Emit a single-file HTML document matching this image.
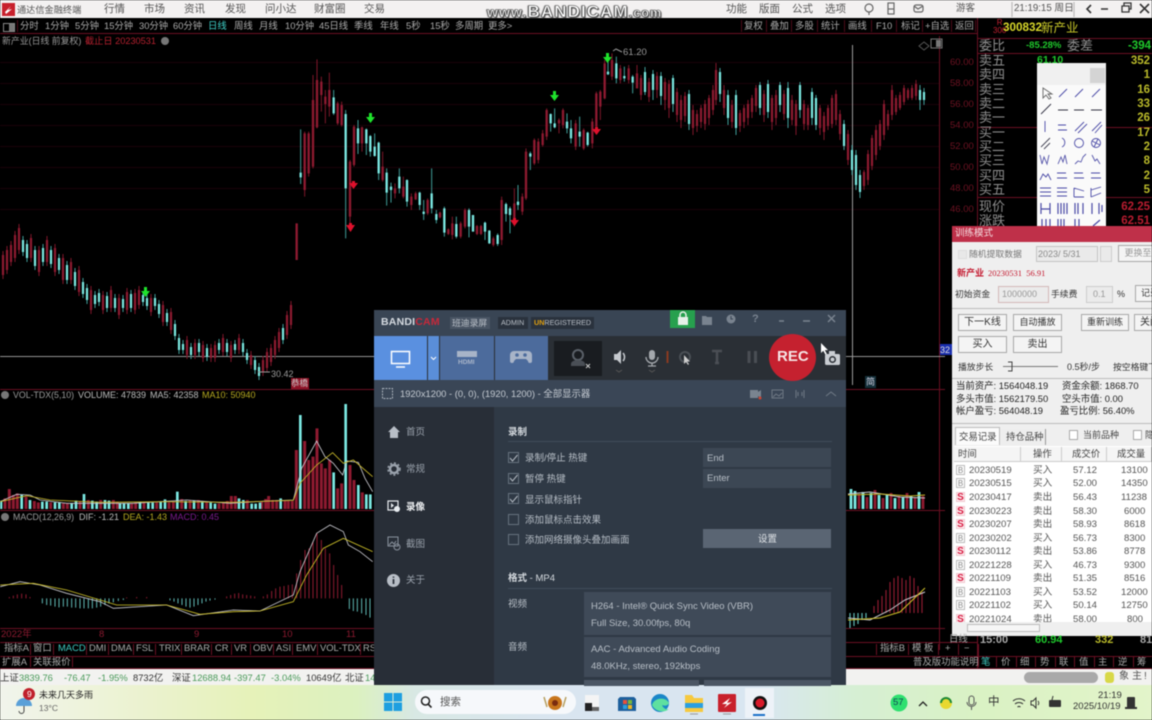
<!DOCTYPE html>
<html lang="zh"><head><meta charset="utf-8"><title>Bandicam</title>
<style>
html,body{margin:0;padding:0;background:#000}
#r{position:relative;width:1152px;height:720px;overflow:hidden;background:#000;font-family:"Liberation Sans","Noto Sans CJK SC",sans-serif;filter:blur(.6px)}
.t{position:absolute;white-space:nowrap;line-height:14px;font-size:10px;color:#aaa}
.b{position:absolute}
svg{position:absolute;left:0;top:0}
.m{color:#555;font-size:10.5px}
.w{color:#222;font-size:10px}
.btn{position:absolute;background:#f4f4f4;border:1px solid #a8a8a8;box-sizing:border-box;text-align:center;font-size:10px;color:#333;line-height:15px;white-space:nowrap;overflow:hidden}
.cb{position:absolute;width:11px;height:11px;border:1px solid #66717d;box-sizing:border-box;left:508px}
.s{font-size:13px;color:#8e8e8e;font-family:"Noto Sans CJK SC",sans-serif}
.y{color:#b9b92a;font-weight:bold;font-size:11.5px;right:2px}
.n{font-size:9.6px;color:#444}
.o{font-size:10px;color:#444}
.bk{color:#b8bfc7;font-size:9.5px}
</style></head><body><div id="r">

<!-- top bar -->
<div class="b" style="left:0;top:0;width:1152px;height:18px;background:#f3f1f1"></div>
<div class="b" style="left:2px;top:3px;width:13px;height:13px;background:#c8202c"></div>
<svg width="20" height="20"><path d="M5 12L11 6L8 10L12 9L6 14z" fill="#fff"/></svg>
<div class="t m" style="left:17px;top:3px;width:64px;font-size:9.2px">通达信金融终端</div>
<div class="t m" style="left:104px;top:2px">行情</div><div class="t m" style="left:144px;top:2px">市场</div><div class="t m" style="left:184px;top:2px">资讯</div><div class="t m" style="left:225px;top:2px">发现</div><div class="t m" style="left:265px;top:2px">问小达</div><div class="t m" style="left:314px;top:2px">财富圈</div><div class="t m" style="left:364px;top:2px">交易</div>
<div class="t" style="left:487px;top:2px;font-size:17px;font-weight:bold;letter-spacing:1.1px;line-height:20px;color:#fff;-webkit-text-stroke:.5px #444;text-shadow:1px 1px 1px #444,-1px 0 1px #666"><span style="font-size:14px">www.</span>BANDICAM<span style="font-size:12.5px">.com</span></div>
<div class="t m" style="left:726px;top:2px">功能</div><div class="t m" style="left:759px;top:2px">版面</div><div class="t m" style="left:792px;top:2px">公式</div><div class="t m" style="left:825px;top:2px">选项</div>
<svg width="1152" height="20" fill="none" stroke="#666" stroke-width="1.2"><circle cx="869" cy="8" r="4"/><path d="M869 12v3"/><rect x="888" y="3" width="6" height="11"/><path d="M888 9h6"/><rect x="914" y="5" width="9" height="7" rx="2"/><path d="M914 6l4 3l5-3"/><path d="M1012 2v15" stroke="#bbb"/><path d="M1074 2v15" stroke="#bbb"/><path d="M1091 5l-4 4l4 4M1101 9h7" stroke="#333" stroke-width="1.6"/><path d="M1122 6h7v6h-7zM1124 6V3h7v6h-2" stroke="#333" stroke-width="1.3"/><path d="M1140 4l9 9M1149 4l-9 9" stroke="#333" stroke-width="1.6"/></svg>
<div class="t m" style="left:956px;top:2px;font-size:9.5px">游客</div>
<div class="t m" style="left:1014px;top:2px;font-size:9.7px">21:19:15 周日</div>

<!-- toolbar -->
<svg width="1152" height="720" fill="none">
<path d="M0 33.5H978M0 389.5H945M0 510.5H945M0 628.5H945M0 642.5H374M0 656.5H374M0 668.5H374" stroke="#6a0f22"/>
<path d="M846 642.5H978M846 656.5H1152M846 668.5H1152" stroke="#6a0f22"/>
<path d="M939.5 36V650M977.5 18V668M978 38.5H1152M978 53.5H1152M978 127.5H1037M978 197.5H1037M1106 127.5H1152M1106 197.5H1152" stroke="#6a0f22"/>
<path d="M17.5 20V32M741.5 20V32M766.5 20V32M791.5 20V32M817.5 20V32M844.5 20V32M871.5 20V32M896.5 20V32M922.5 20V32M951.5 20V32M975.5 20V32" stroke="#4c0a18"/>
<path d="M30.5 644V655M53.5 644V655M86.5 644V655M108.5 644V655M133.5 644V655M155.5 644V655M181.5 644V655M211.5 644V655M231.5 644V655M250.5 644V655M273.5 644V655M292.5 644V655M317.5 644V655M360.5 644V655M30.5 657V667M72.5 657V667" stroke="#6a0f22"/>
<path d="M876.5 644V655M908.5 644V655M938.5 644V655M958.5 644V655M978.5 644V667M996.5 657V667M1016.5 657V667M1035.5 657V667M1055.5 657V667M1074.5 657V667M1094.5 657V667M1113.5 657V667M1133.5 657V667" stroke="#6a0f22"/>
<rect x="3.5" y="23.5" width="11" height="8" stroke="#888"/><rect x="9" y="24" width="5" height="7" fill="#777"/>
<path d="M0 62.5H939M0 83.5H939M0 104.5H939M0 125.5H939M0 146.5H939M0 167.5H939M0 188.5H939M0 209.5H939" stroke="#1a0208"/>
<path d="M0 356.5H945" stroke="#b8b8b8" stroke-opacity=".8"/><path d="M852.5 45V385" stroke="#9c9c9c"/>
<path d="M924 42l5 4l-5 4l-5-4z" stroke="#555"/><rect x="931" y="39" width="11" height="9" stroke="#777"/><rect x="936" y="40" width="5" height="7" fill="#777"/>
</svg>
<div class="t" style="left:20px;top:19px;font-size:9.4px">分时</div><div class="t" style="left:45px;top:19px;font-size:9.4px">1分钟</div><div class="t" style="left:75px;top:19px;font-size:9.4px">5分钟</div><div class="t" style="left:104px;top:19px;font-size:9.4px">15分钟</div><div class="t" style="left:139px;top:19px;font-size:9.4px">30分钟</div><div class="t" style="left:173px;top:19px;font-size:9.4px">60分钟</div><div class="t" style="left:208px;top:19px;font-size:9.4px;color:#3fd0c8">日线</div><div class="t" style="left:234px;top:19px;font-size:9.4px">周线</div><div class="t" style="left:259px;top:19px;font-size:9.4px">月线</div><div class="t" style="left:285px;top:19px;font-size:9.4px">10分钟</div><div class="t" style="left:319px;top:19px;font-size:9.4px">45日线</div><div class="t" style="left:354px;top:19px;font-size:9.4px">季线</div><div class="t" style="left:380px;top:19px;font-size:9.4px">年线</div><div class="t" style="left:406px;top:19px;font-size:9.4px">5秒</div><div class="t" style="left:430px;top:19px;font-size:9.4px">15秒</div><div class="t" style="left:455px;top:19px;font-size:9.4px">多周期</div><div class="t" style="left:488px;top:19px;font-size:9.4px">更多&gt;</div>
<div class="t" style="left:744px;top:19px;font-size:9.4px">复权</div><div class="t" style="left:770px;top:19px;font-size:9.4px">叠加</div><div class="t" style="left:795px;top:19px;font-size:9.4px">多股</div><div class="t" style="left:821px;top:19px;font-size:9.4px">统计</div><div class="t" style="left:848px;top:19px;font-size:9.4px">画线</div><div class="t" style="left:876px;top:19px;font-size:9.4px">F10</div><div class="t" style="left:901px;top:19px;font-size:9.4px">标记</div><div class="t" style="left:925px;top:19px;font-size:9.4px">+自选</div><div class="t" style="left:955px;top:19px;font-size:9.4px">返回</div>
<div class="t" style="left:2px;top:34px;font-size:8.9px;color:#999">新产业(日线 前复权)</div>
<div class="t" style="left:85px;top:34px;font-size:9.2px;color:#b4202e">截止日 20230531</div>
<div class="b" style="left:161px;top:37px;width:8px;height:8px;border-radius:50%;background:#777"></div>

<!-- candles -->
<svg width="1152" height="720" fill="none">
<defs>
<path id="lr" d="M3 255V275M7 250V270M11 245V262M15 235V258M19 228V250M31 238V258M39 250V272M47 240V262M55 248V272M63 258V280M71 262V280M79 270V292M91 290V310M103 295V310M111 290V308M119 298V315M127 292V310M135 293V310M139 290V305M151 298V312M163 305V322M171 312V330M187 340V355M195 343V355M203 345V358M211 348V358M215 345V358M223 338V352M231 345V358M239 338V350M251 355V365M263 360V372M267 352V368M271 348V362M275 340V355M279 332V348M287 315V335M291 305V325"/>
<path id="lc" d="M23 240V252M27 244V258M35 250V266M43 248V262M51 250V264M59 258V270M67 265V280M75 272V286M83 282V294M87 288V300M95 295V304M99 293V302M107 296V308M115 298V308M123 299V308M131 294V308M143 295V302M147 298V306M155 298V306M159 304V314M167 313V322M175 324V336M179 338V350M183 344V350M191 347V355M199 343V352M207 348V357M219 343V350M227 343V352M235 344V350M243 343V352M247 353V360M255 360V370M259 367V376M283 328V340"/>
</defs>
<g transform="translate(240,40) scale(.33333)">
<path stroke="#7e1629" stroke-width="3" d="M170 550V660M194 275V470M206 275V410M219 105V385M231 58V265M244 110V215M256 150V250M268 98V230M293 185V255M305 185V260M330 360V560M342 255V380M366 260V335M428 335V425M465 430V475M490 410V475M514 460V510M527 455V480M563 475V525M600 515V535M625 565V585M637 530V598M662 545V595M675 505V565M711 555V585M723 555V585M760 590V620M785 470V615M823 445V560M847 460V525M858 325V480M883 295V375M895 295V370M908 270V320M920 205V300M957 235V280M969 205V265M1007 240V330M1031 265V330M1057 235V325M1069 155V265M1081 150V240M1094 60V178M1116 40V120M1141 75V130M1166 75V130M1191 75V145"/>
<path stroke="#8e1a30" stroke-width="7" d="M170 550V660M194 280V450M206 280V400M219 180V380M231 120V262M244 125V165M256 170V192M268 150V200M293 190V250M305 195V255M330 365V530M342 260V375M366 262V310M428 380V420M465 445V460M490 440V470M514 470V495M527 460V478M563 480V520M600 518V532M625 568V582M637 550V585M662 550V590M675 510V560M711 558V582M723 558V582M760 595V615M785 480V600M823 490V555M847 470V515M858 335V475M883 300V370M895 305V360M908 280V315M920 210V290M957 240V250M969 210V255M1007 250V320M1031 270V325M1057 245V310M1069 160V260M1081 155V200M1094 70V175M1116 60V110M1141 85V120M1166 85V120M1191 100V145"/>
<path stroke="#3f9c98" stroke-width="3" d="M182 268V432M281 150V225M317 210V595M354 240V342M379 265V345M391 285V350M404 280V350M416 305V420M440 385V497M453 428V488M478 385V460M501 418V500M539 455V510M551 480V540M575 385V520M589 510V550M613 500V590M649 530V595M687 505V592M699 525V575M735 545V600M748 570V612M773 580V618M798 488V545M810 500V580M834 435V510M871 335V390M932 220V275M944 205V265M981 220V280M993 240V310M1019 230V320M1043 275V320M1104 60V105M1129 50V130M1153 80V125M1178 105V160"/>
<path stroke="#7be8e2" stroke-width="7" d="M182 398V412M281 172V220M317 222V445M354 265V310M379 268V310M391 288V335M404 320V348M416 308V400M440 398V458M453 440V450M478 410V445M501 420V485M539 458V495M551 515V522M575 460V505M589 522V540M613 505V578M649 552V590M687 510V560M699 525V575M735 548V575M748 572V610M773 585V612M798 492V522M810 505V525M834 485V495M871 340V350M932 222V250M944 250V262M981 245V265M993 265V295M1019 275V290M1043 278V315M1104 95V103M1129 70V115M1153 108V115M1178 110V128"/>
</g>
<!-- right side candles -->
<path stroke="#7e1629" d="M641 75V100M649 78V102M657 72V98M665 78V110M669 80V118M677 88V122M681 95V128M685 92V122M693 105V135M697 110V132M701 105V128M705 100V130M709 95V125M713 85V115M716 63V105M724 85V115M732 100V128M740 110V132M744 105V128M748 100V125M752 95V118M756 85V112M764 90V122M772 95V130M776 90V125M784 90V120M792 95V125M796 100V135M804 100V130M808 105V130M820 105V135M824 112V140M828 105V130M832 95V128M836 90V125M840 110V140M848 130V165M864 170V190M868 150V185M872 135V170M876 125V160M880 120V150M884 100V140M888 110V130M892 85V120M896 95V115M900 92V110M904 85V105M908 88V100M912 85V100M916 80V100"/>
<path stroke="#8e1a30" stroke-width="2.200" d="M641 78V95M649 82V97M657 76V90M665 82V100M669 84V108M677 92V115M681 100V120M685 96V116M693 110V128M697 114V126M701 108V122M705 104V124M709 98V118M713 90V110M716 70V100M724 90V108M732 105V122M740 113V126M744 108V122M748 104V118M752 98V112M756 88V106M764 94V115M772 98V122M776 95V118M784 94V114M792 100V120M796 104V126M804 104V124M808 108V125M820 108V128M824 116V132M828 108V126M832 98V124M836 94V120M840 114V134M848 134V160M864 172V186M868 154V180M872 138V166M876 130V155M880 124V146M884 104V135M888 114V126M892 90V115M896 98V112M900 95V108M904 88V102M908 90V98M912 88V98M916 84V96"/>
<path stroke="#3f9c98" d="M645 67V95M653 70V100M661 72V105M673 75V112M689 90V130M720 68V102M728 90V125M736 90V135M760 82V115M768 80V118M780 82V112M788 82V128M800 82V118M812 88V125M816 95V130M844 120V150M852 145V175M856 150V190M860 170V198M920 85V110M924 88V105"/>
<path stroke="#7be8e2" stroke-width="2.200" d="M645 72V92M653 74V90M661 76V96M673 78V104M689 94V124M720 72V94M728 95V118M736 95V128M760 85V108M768 84V112M780 85V105M788 88V118M800 85V110M812 92V118M816 98V125M844 124V146M852 150V170M856 155V185M860 175V192M920 90V100M924 92V100"/>
<!-- left candles -->
<use href="#lr" stroke="#7e1629" transform="translate(0,-4)"/><use href="#lr" stroke="#7e1629" transform="translate(0,4)"/>
<use href="#lr" stroke="#8e1a30" stroke-width="2.200"/>
<use href="#lc" stroke="#3f9c98" transform="translate(0,-4)"/><use href="#lc" stroke="#3f9c98" transform="translate(0,4)"/>
<use href="#lc" stroke="#7be8e2" stroke-width="2.200"/>
<!-- signals -->
<g fill="#1fe32c"><path d="M369 113h3v4h3l-4.500 6l-4.500-6h3z"/><path d="M553 91h3v4h3l-4.500 6l-4.500-6h3z"/><path d="M606 53h3v4h3l-4.500 6l-4.500-6h3z"/><path d="M144 287h3v4h3l-4.500 6l-4.500-6h3z"/></g>
<g fill="#e0102c"><path d="M352 181h3v2h3l-4.500 6l-4.500-6h3z"/><path d="M349 223h3v2h3l-4.500 7l-4.500-7h3z"/><path d="M513 218h3v2h3l-4.500 6l-4.500-6h3z"/><path d="M595 127h3v2h3l-4.500 6l-4.500-6h3z"/></g>
<path d="M613 51l3-2 6 3M258 372h12" stroke="#999"/>
<!-- volume (zoom space) -->
<g transform="translate(0,385) scale(.33333)">
<path stroke="#8e1a30" stroke-width="9" d="M15 372V340M28 372V312M40 372V330M52 372V325M78 372V335M103 372V348M115 372V352M152 372V352M190 372V355M202 372V355M240 372V348M265 372V345M302 372V345M340 372V345M352 372V350M395 372V355M407 372V352M432 372V352M470 372V352M507 372V352M520 372V350M545 372V342M570 372V345M595 372V345M620 372V352M657 372V355M670 372V352M682 372V348M694 372V333M706 372V333M742 372V345M785 372V350M797 372V342M806 372V333M818 372V345M830 372V345M855 372V345M865 372V348M877 372V348M889 372V195M914 372V168M926 372V225M939 372V215M951 372V130M964 372V235M976 372V250M989 372V225M1013 372V310M1025 372V295M1050 372V240M1062 372V285M1087 372V322"/>
<path stroke="#7be8e2" stroke-width="8" d="M3 372V347M65 372V330M90 372V345M127 372V350M140 372V350M165 372V352M178 372V352M215 372V355M228 372V347M252 372V327M277 372V347M290 372V350M315 372V345M327 372V347M360 372V355M372 372V355M385 372V355M420 372V350M445 372V353M458 372V353M482 372V350M495 372V343M532 372V320M557 372V348M582 372V347M607 372V348M632 372V353M645 372V356M717 372V340M730 372V345M755 372V356M767 372V356M780 372V353M842 372V340M901 372V90M1001 372V262M1037 372V57M1075 372V300M1099 372V328M1111 372V328"/>
<path stroke="#c9c9d0" stroke-width="2.500" d="M0 350L50 328L90 330L120 345L200 355L400 355L560 345L690 355L800 348L880 345L905 250L950 168L975 215L1000 235L1028 270L1040 228L1075 232L1095 280L1118 320"/>
<path stroke="#c8b82a" stroke-width="2.500" d="M0 350L80 332L150 345L300 352L500 350L700 352L880 346L900 295L950 240L998 203L1030 235L1060 225L1118 275"/>
</g>
<!-- macd (zoom space) -->
<g transform="translate(0,385) scale(.33333)">
<path stroke="#8e1a30" stroke-width="3" d="M28 640V636M40 640V632M52 640V628M65 640V626M78 640V628M90 640V636M380 640V637M410 640V636M440 640V636M680 640V634M692 640V630M704 640V626M716 640V624M728 640V628M740 640V630M752 640V632M764 640V634M790 640V634M802 640V628M815 640V618M827 640V610M840 640V605M852 640V603M865 640V600M877 640V598M890 640V565M902 640V525M915 640V495M927 640V490M939 640V470M951 640V445M964 640V465M976 640V490M989 640V505M1001 640V540M1013 640V570M1025 640V600"/>
<path stroke="#5fb8b4" stroke-width="3" d="M127 640V655M140 640V660M152 640V662M165 640V665M177 640V667M190 640V665M202 640V665M215 640V668M227 640V668M240 640V670M252 640V670M265 640V670M277 640V670M290 640V668M302 640V665M315 640V660M327 640V655M340 640V652M355 640V648M370 640V645M510 640V646M522 640V650M534 640V655M546 640V660M558 640V665M570 640V668M582 640V665M594 640V660M606 640V655M618 640V650M630 640V647M645 640V644M1048 640V672M1060 640V678M1072 640V680M1085 640V685M1098 640V690M1110 640V698"/>
<path stroke="#c9c9d0" stroke-width="2.500" d="M0 605L60 590L120 600L200 625L300 650L340 670L500 660L580 692L700 675L780 678L880 630L900 560L950 445L990 420L1030 440L1045 480L1080 500L1118 530"/>
<path stroke="#d2c42a" stroke-width="2.500" d="M0 600L100 595L200 615L350 660L500 660L600 688L700 680L780 678L880 650L920 570L970 490L1030 460L1118 500"/>
</g>
<!-- volume & macd right -->
<path stroke="#8e1a30" stroke-width="2.800" d="M859 509V494M867 509V497M875 509V490M883 509V498M891 509V493M899 509V496M907 509V493M915 509V498M923 509V496"/>
<path stroke="#7be8e2" stroke-width="2.800" d="M851 509V489M855 509V491M863 509V492M871 509V493M879 509V495M887 509V494M895 509V498M903 509V497M911 509V496M919 509V492"/>
<path stroke="#c9c9d0" d="M848 494L870 492L900 497L925 498"/><path stroke="#c8b82a" d="M848 495L880 494L910 496L925 495"/>
<path stroke="#8e1a30" stroke-width="1.200" d="M874 613V606M878 613V600M882 613V596M886 613V590M890 613V582M894 613V578M898 613V576M902 613V578M906 613V580M910 613V576M914 613V578M918 613V586M922 613V592"/>
<path stroke="#5fb8b4" stroke-width="1.200" d="M850 613V628M854 613V626M858 613V624M862 613V620M866 613V618"/>
<path stroke="#c9c9d0" d="M848 618L870 620L890 610L905 600L925 592"/><path stroke="#d2c42a" d="M848 620L880 618L900 612L925 588"/>
</svg>
<div class="t" style="left:623px;top:46px;font-size:9.5px;color:#999">61.20</div>
<div class="t" style="left:271px;top:367px;font-size:9px;color:#999">30.42</div>
<div class="b" style="left:291px;top:378px;width:18px;height:11px;background:#8e1226"></div>
<div class="t" style="left:291px;top:376px;font-size:8.5px;color:#ccc">恭橋</div>
<div class="t" style="left:865px;top:376px;font-size:9px;color:#ccd;background:#15303a;line-height:12px;padding:0 1px">简</div>
<div class="b" style="left:940px;top:344px;width:12px;height:11px;background:#1a2fae"></div>
<div class="t" style="left:940px;top:343px;font-size:9px;color:#ddd">32</div>

<!-- axis labels -->
<div class="t" style="left:950px;top:56px;font-size:9.5px;color:#6e1222">60.00</div><div class="t" style="left:950px;top:77px;font-size:9.5px;color:#6e1222">58.00</div><div class="t" style="left:950px;top:98px;font-size:9.5px;color:#6e1222">56.00</div><div class="t" style="left:950px;top:119px;font-size:9.5px;color:#6e1222">54.00</div><div class="t" style="left:950px;top:140px;font-size:9.5px;color:#6e1222">52.00</div><div class="t" style="left:950px;top:161px;font-size:9.5px;color:#6e1222">50.00</div><div class="t" style="left:950px;top:182px;font-size:9.5px;color:#6e1222">48.00</div><div class="t" style="left:950px;top:203px;font-size:9.5px;color:#6e1222">46.00</div>

<!-- indicator titles -->
<div class="b" style="left:1px;top:391px;width:8px;height:8px;border-radius:50%;background:#777"></div>
<div class="t" style="left:13px;top:388px;font-size:8.8px;color:#999">VOL-TDX(5,10)</div><div class="t" style="left:78px;top:388px;font-size:9px;color:#bbb">VOLUME: 47839</div><div class="t" style="left:150px;top:388px;font-size:9px;color:#bbb">MA5: 42358</div><div class="t" style="left:202px;top:388px;font-size:9px;color:#b5a820">MA10: 50940</div>
<div class="b" style="left:1px;top:513px;width:8px;height:8px;border-radius:50%;background:#777"></div>
<div class="t" style="left:13px;top:510px;font-size:8.8px;color:#999">MACD(12,26,9)</div><div class="t" style="left:79px;top:510px;font-size:9px;color:#bbb">DIF: -1.21</div><div class="t" style="left:123px;top:510px;font-size:9px;color:#b5a820">DEA: -1.43</div><div class="t" style="left:170px;top:510px;font-size:9px;color:#7a1a8c">MACD: 0.45</div>

<!-- bottom tabs -->
<div class="t" style="left:1px;top:628px;font-size:9.5px;color:#8c1a30">2022年</div><div class="t" style="left:99px;top:628px;font-size:9.5px;color:#8c1a30">8</div><div class="t" style="left:194px;top:628px;font-size:9.5px;color:#8c1a30">9</div><div class="t" style="left:282px;top:628px;font-size:9.5px;color:#8c1a30">10</div><div class="t" style="left:346px;top:628px;font-size:9.5px;color:#8c1a30">11</div>
<div class="t" style="left:4px;top:641px;font-size:9.4px">指标A</div><div class="t" style="left:33px;top:641px;font-size:9.4px">窗口</div><div class="t" style="left:58px;top:641px;font-size:9.4px;color:#3fc8c0">MACD</div><div class="t" style="left:89px;top:641px;font-size:9.4px">DMI</div><div class="t" style="left:111px;top:641px;font-size:9.4px">DMA</div><div class="t" style="left:136px;top:641px;font-size:9.4px">FSL</div><div class="t" style="left:159px;top:641px;font-size:9.4px">TRIX</div><div class="t" style="left:184px;top:641px;font-size:9.4px">BRAR</div><div class="t" style="left:215px;top:641px;font-size:9.4px">CR</div><div class="t" style="left:234px;top:641px;font-size:9.4px">VR</div><div class="t" style="left:253px;top:641px;font-size:9.4px">OBV</div><div class="t" style="left:276px;top:641px;font-size:9.4px">ASI</div><div class="t" style="left:296px;top:641px;font-size:9.4px">EMV</div><div class="t" style="left:320px;top:641px;font-size:9.4px">VOL-TDX</div><div class="t" style="left:363px;top:641px;font-size:9.4px">RS</div>
<div class="t" style="left:2px;top:655px;font-size:9.4px">扩展A</div><div class="t" style="left:33px;top:655px;font-size:9.4px">关联报价</div>
<div class="t" style="left:880px;top:641px;font-size:9.4px">指标B</div><div class="t" style="left:912px;top:641px;font-size:9.4px">模 板</div><div class="t" style="left:945px;top:641px;font-size:9.4px">+</div><div class="t" style="left:964px;top:641px;font-size:9.4px">−</div>
<div class="t" style="left:913px;top:655px;font-size:9.4px">普及版功能说明</div><div class="t" style="left:981px;top:655px;font-size:9.4px;color:#3fc8c0">笔</div><div class="t" style="left:1001px;top:655px;font-size:9.4px">价</div><div class="t" style="left:1020px;top:655px;font-size:9.4px">细</div><div class="t" style="left:1040px;top:655px;font-size:9.4px">势</div><div class="t" style="left:1059px;top:655px;font-size:9.4px">联</div><div class="t" style="left:1079px;top:655px;font-size:9.4px">值</div><div class="t" style="left:1098px;top:655px;font-size:9.4px">主</div><div class="t" style="left:1118px;top:655px;font-size:9.4px">逆</div><div class="t" style="left:1137px;top:655px;font-size:9.4px">筹</div>

<!-- quote panel -->
<div class="t" style="left:993px;top:19px;font-size:8px;line-height:8px;color:#c02030;text-align:center">R<br>300</div>
<div class="t" style="left:1003px;top:21px;font-size:11.7px;font-weight:bold;color:#d8d82a">300832</div>
<div class="t" style="left:1041px;top:21px;font-size:12.5px;color:#c8c82a">新产业</div>
<div class="t s" style="left:979px;top:38px">委比</div><div class="t" style="left:1026px;top:39px;font-size:9.5px;font-weight:bold;color:#1fc82c">-85.28%</div><div class="t s" style="left:1067px;top:38px">委差</div><div class="t y" style="top:39px;right:1px;color:#1fc82c">-394</div>
<div class="t s" style="left:979px;top:53px">卖五</div><div class="t s" style="left:979px;top:67px">卖四</div><div class="t s" style="left:979px;top:82px">卖三</div><div class="t s" style="left:979px;top:96px">卖二</div><div class="t s" style="left:979px;top:110px">卖一</div><div class="t s" style="left:979px;top:125px">买一</div><div class="t s" style="left:979px;top:139px">买二</div><div class="t s" style="left:979px;top:153px">买三</div><div class="t s" style="left:979px;top:168px">买四</div><div class="t s" style="left:979px;top:182px">买五</div><div class="t s" style="left:979px;top:199px">现价</div><div class="t s" style="left:979px;top:213px">涨跌</div>
<div class="t" style="left:1037px;top:53px;font-size:10.5px;font-weight:bold;color:#1fc82c">61.10</div>
<div class="t y" style="top:54px">352</div><div class="t y" style="top:68px">1</div><div class="t y" style="top:83px">16</div><div class="t y" style="top:97px">33</div><div class="t y" style="top:111px">26</div><div class="t y" style="top:126px">17</div><div class="t y" style="top:140px">2</div><div class="t y" style="top:154px">8</div><div class="t y" style="top:169px">2</div><div class="t y" style="top:183px">5</div>
<div class="t y" style="top:200px;color:#b81c30">62.25</div><div class="t y" style="top:214px;color:#b81c30">62.51</div>

<!-- palette -->
<div class="b" style="left:1037px;top:63px;width:69px;height:165px;background:#fafafa;border-radius:2px"></div>
<div class="b" style="left:1037px;top:63px;width:69px;height:22px;background:#f0f0f0"></div>
<div class="b" style="left:1090px;top:68px;width:15px;height:15px;background:#d4d4d4"></div>
<svg width="1152" height="230" fill="none" stroke="#4a4aa6" stroke-width=".9">
<path d="M1043 88l0 10l3-3l3 4l2-1l-3-4h4z" stroke="#666"/><path d="M1059 97l8-8M1075 97l8-8M1092 97l8-8"/>
<path d="M1041 114l10-10M1058 110h10M1074 110h10M1091 110h11" stroke="#334"/>
<path d="M1045 121v11M1058 130h9M1058 125h8M1075 131l9-9M1078 133l9-9M1092 131l9-9M1095 133l7-8"/>
<path d="M1041 147l9-9M1044 149l6-6" stroke="#445"/><path d="M1062 138a5 5 0 0 1 0 9" /><circle cx="1079" cy="143" r="4.500"/><circle cx="1096" cy="143" r="4.500"/><path d="M1092 141l8 4M1094 147l4-8"/>
<path d="M1040 155l2 9l2-7l3 7l2-9M1058 164l3-7l2 5l2-7l2 9M1075 164l3-3l3 1l2-5l3-3M1092 155l3 6l2-2l3 5" stroke="#55a"/>
<path d="M1040 180l3-6l3 3l2-3l3 6M1057 178h10M1057 173h9M1074 178h10M1074 173h9M1091 178h10M1091 173h9"/>
<path d="M1040 188h11M1040 192h11M1040 196h11M1057 188h10M1057 192h10M1057 196h10M1074 188l10 3M1074 197h10M1074 188v9M1091 190l10-3M1091 197l10-4M1091 188v9"/>
<path d="M1041 203v11M1041 209h9M1050 203v11M1058 203v11M1061 203v11M1064 203v11M1067 203v11M1075 203v11M1078 203v11M1083 203v11M1092 203v11M1099 203v11M1102 205v7" stroke-width="1.200"/>
<path d="M1042 219v8M1046 219v8M1050 219v8M1058 219v8M1061 219v8M1064 219v8M1075 219v8M1079 219v8M1093 226l7-6" stroke-width="1.200"/>
</svg>

<!-- training dialog -->
<div class="b" style="left:952px;top:226px;width:200px;height:410px;background:#efefef"></div>
<div class="b" style="left:952px;top:226px;width:200px;height:16px;background:#bf3049"></div>
<div class="t" style="left:955px;top:227px;font-size:9.5px;color:#f4dfe2">训练模式</div>
<div class="b" style="left:958px;top:250px;width:9px;height:9px;background:#e8e8e8;border:1px solid #ddd;box-sizing:border-box"></div>
<div class="t" style="left:969px;top:247px;font-size:8.8px;color:#777">随机提取数据</div>
<div class="b" style="left:1036px;top:246px;width:62px;height:16px;background:#eaeaea;border:1px solid #c4c4c4;box-sizing:border-box"></div>
<div class="t" style="left:1038px;top:247px;font-size:9px;color:#8a8a8a">2023/ 5/31</div>
<div class="b" style="left:1100px;top:246px;width:12px;height:16px;background:#eaeaea;border:1px solid #ccc;box-sizing:border-box"></div>
<div class="btn" style="left:1118px;top:245px;width:40px;height:17px;color:#999;font-size:9px">更换至</div>
<div class="t" style="left:957px;top:266px;font-size:9px;color:#c41a30;font-weight:bold">新产业</div>
<div class="t" style="left:988px;top:266px;font-size:8.5px;color:#c41a30;font-family:'Liberation Serif',serif">20230531&nbsp; 56.91</div>
<div class="t" style="left:955px;top:287px;font-size:8.8px;color:#333">初始资金</div>
<div class="b" style="left:998px;top:286px;width:51px;height:17px;background:#ebebeb;border:1px solid #d2b8b8;box-sizing:border-box"></div>
<div class="t" style="left:1002px;top:287px;font-size:9px;color:#999">1000000</div>
<div class="t" style="left:1051px;top:287px;font-size:8.8px;color:#333">手续费</div>
<div class="b" style="left:1086px;top:286px;width:27px;height:17px;background:#ebebeb;border:1px solid #ccc;box-sizing:border-box"></div>
<div class="t" style="left:1093px;top:287px;font-size:9px;color:#999">0.1</div>
<div class="t" style="left:1117px;top:287px;font-size:9px;color:#333">%</div>
<div class="btn" style="left:1135px;top:285px;width:30px;height:17px;font-size:9px">记录</div>
<div class="b" style="left:952px;top:308px;width:200px;height:1px;background:#bbb"></div>
<div class="btn" style="left:958px;top:314px;width:49px;height:17px">下一K线</div><div class="btn" style="left:1013px;top:314px;width:49px;height:17px;font-size:9px">自动播放</div><div class="btn" style="left:1081px;top:314px;width:48px;height:17px;font-size:9px">重新训练</div><div class="btn" style="left:1134px;top:314px;width:30px;height:17px;text-align:left;padding-left:5px">关闭</div>
<div class="btn" style="left:958px;top:336px;width:49px;height:17px">买入</div><div class="btn" style="left:1013px;top:336px;width:49px;height:17px">卖出</div>
<div class="t" style="left:958px;top:360px;font-size:8.8px;color:#333">播放步长</div>
<svg width="1152" height="380" fill="none"><path d="M1003 366.500H1058" stroke="#777"/><path d="M1008 362h4v9h-4" stroke="#444"/></svg>
<div class="t" style="left:1067px;top:360px;font-size:9px;color:#333">0.5秒/步</div><div class="t" style="left:1113px;top:360px;font-size:8.8px;color:#333">按空格键下</div>
<div class="b" style="left:952px;top:378px;width:200px;height:1px;background:#bbb"></div>
<div class="t w" style="left:956px;top:379px;font-size:9.4px">当前资产: 1564048.19</div><div class="t w" style="left:1062px;top:379px;font-size:9.4px">资金余额: 1868.70</div>
<div class="t w" style="left:956px;top:392px;font-size:9.4px">多头市值: 1562179.50</div><div class="t w" style="left:1062px;top:392px;font-size:9.4px">空头市值: 0.00</div>
<div class="t w" style="left:956px;top:404px;font-size:9.4px">帐户盈亏: 564048.19</div><div class="t w" style="left:1060px;top:404px;font-size:9.4px">盈亏比例: 56.40%</div>
<div class="b" style="left:952px;top:423px;width:200px;height:1px;background:#bbb"></div>
<div class="b" style="left:955px;top:427px;width:45px;height:18px;background:#fbfbfb;border:1px solid #bbb;border-bottom:0;box-sizing:border-box"></div>
<div class="b" style="left:1000px;top:429px;width:46px;height:16px;background:#eee;border-right:1px solid #999;box-sizing:border-box"></div>
<div class="t o" style="left:959px;top:430px;font-size:9.4px">交易记录</div><div class="t o" style="left:1006px;top:430px;font-size:9.4px">持仓品种</div>
<div class="b" style="left:1069px;top:430px;width:9px;height:10px;background:#fff;border:1px solid #aaa;box-sizing:border-box"></div><div class="t o" style="left:1083px;top:428px;font-size:9px">当前品种</div>
<div class="b" style="left:1133px;top:430px;width:9px;height:10px;background:#fff;border:1px solid #aaa;box-sizing:border-box"></div><div class="t o" style="left:1145px;top:428px;font-size:9px">隐</div>
<div class="b" style="left:954px;top:446px;width:198px;height:176px;background:#fff"></div>
<div class="b" style="left:954px;top:447px;width:198px;height:15px;background:#f5f5f5;border-bottom:1px solid #ccc;box-sizing:border-box"></div>
<svg width="1152" height="462" fill="none" stroke="#ccc"><path d="M1020.500 447V462M1061.500 447V462M1106.500 447V462M1151.500 447V462"/></svg>
<div class="t o" style="left:958px;top:447px;font-size:9.4px">时间</div><div class="t o" style="left:1033px;top:447px;font-size:9.4px">操作</div><div class="t o" style="left:1072px;top:447px;font-size:9.4px">成交价</div><div class="t o" style="left:1117px;top:447px;font-size:9.4px">成交量</div>

<div class="b" style="left:954px;top:463px;width:198px;height:159px;overflow:hidden">
<style>.i{position:absolute;left:2px;width:9px;height:10px;box-sizing:border-box;font-size:8px;line-height:9px;text-align:center;border:1px solid #bbb;color:#888;background:#fff}.i.sv{border-color:#f0c8d0;color:#d81a40;font-weight:bold;background:#fdeef0;font-size:10px}.q{position:absolute;white-space:nowrap;line-height:13px;color:#555;font-size:9.6px}</style>
<div class="i" style="top:2px">B</div><div class="q" style="left:15px;top:1px">20230519</div><div class="q" style="left:79px;top:1px">买入</div><div class="q" style="left:119px;top:1px">57.12</div><div class="q" style="left:167px;top:1px">13100</div>
<div class="i" style="top:15px">B</div><div class="q" style="left:15px;top:14px">20230515</div><div class="q" style="left:79px;top:14px">买入</div><div class="q" style="left:119px;top:14px">52.00</div><div class="q" style="left:167px;top:14px">14350</div>
<div class="i sv" style="top:29px">S</div><div class="q" style="left:15px;top:28px">20230417</div><div class="q" style="left:79px;top:28px">卖出</div><div class="q" style="left:119px;top:28px">56.43</div><div class="q" style="left:167px;top:28px">11238</div>
<div class="i sv" style="top:43px">S</div><div class="q" style="left:15px;top:42px">20230223</div><div class="q" style="left:79px;top:42px">卖出</div><div class="q" style="left:119px;top:42px">58.30</div><div class="q" style="left:170px;top:42px">6000</div>
<div class="i sv" style="top:56px">S</div><div class="q" style="left:15px;top:55px">20230207</div><div class="q" style="left:79px;top:55px">卖出</div><div class="q" style="left:119px;top:55px">58.93</div><div class="q" style="left:170px;top:55px">8618</div>
<div class="i" style="top:70px">B</div><div class="q" style="left:15px;top:69px">20230202</div><div class="q" style="left:79px;top:69px">买入</div><div class="q" style="left:119px;top:69px">56.73</div><div class="q" style="left:170px;top:69px">8300</div>
<div class="i sv" style="top:83px">S</div><div class="q" style="left:15px;top:82px">20230112</div><div class="q" style="left:79px;top:82px">卖出</div><div class="q" style="left:119px;top:82px">53.86</div><div class="q" style="left:170px;top:82px">8778</div>
<div class="i" style="top:97px">B</div><div class="q" style="left:15px;top:96px">20221228</div><div class="q" style="left:79px;top:96px">买入</div><div class="q" style="left:119px;top:96px">46.73</div><div class="q" style="left:170px;top:96px">9300</div>
<div class="i sv" style="top:110px">S</div><div class="q" style="left:15px;top:109px">20221109</div><div class="q" style="left:79px;top:109px">卖出</div><div class="q" style="left:119px;top:109px">51.35</div><div class="q" style="left:170px;top:109px">8516</div>
<div class="i" style="top:124px">B</div><div class="q" style="left:15px;top:123px">20221103</div><div class="q" style="left:79px;top:123px">买入</div><div class="q" style="left:119px;top:123px">53.52</div><div class="q" style="left:167px;top:123px">12000</div>
<div class="i" style="top:137px">B</div><div class="q" style="left:15px;top:136px">20221102</div><div class="q" style="left:79px;top:136px">买入</div><div class="q" style="left:119px;top:136px">50.14</div><div class="q" style="left:167px;top:136px">12750</div>
<div class="i sv" style="top:151px">S</div><div class="q" style="left:15px;top:150px">20221024</div><div class="q" style="left:79px;top:150px">卖出</div><div class="q" style="left:119px;top:150px">58.00</div><div class="q" style="left:173px;top:150px">800</div>
</div>
<div class="b" style="left:967px;top:624px;width:73px;height:8px;background:#f6f6f6;border:1px solid #bbb;box-sizing:border-box"></div>
<div class="t" style="left:980px;top:633px;font-size:11px;font-weight:bold;color:#aaa">15:00</div>
<div class="t" style="left:1035px;top:633px;font-size:11px;font-weight:bold;color:#1fc82c">60.94</div>
<div class="t" style="left:1095px;top:633px;font-size:11px;font-weight:bold;color:#b9b92a">332</div>
<div class="t" style="left:1140px;top:633px;font-size:11px;font-weight:bold;color:#aaa">81</div>
<div class="t" style="left:949px;top:632px;font-size:9.4px;color:#aaa">日线</div>

<!-- status bar -->
<div class="b" style="left:0;top:669px;width:1152px;height:16px;background:#f2f2f0"></div>
<div class="t" style="left:0;top:671px;font-size:9.4px;color:#333">上证</div><div class="t" style="left:19px;top:671px;font-size:9.4px;color:#4a9a5a">3839.76</div><div class="t" style="left:64px;top:671px;font-size:9.4px;color:#4a9a5a">-76.47</div><div class="t" style="left:98px;top:671px;font-size:9.4px;color:#4a9a5a">-1.95%</div><div class="t" style="left:133px;top:671px;font-size:9.4px;color:#333">8732亿</div><div class="t" style="left:172px;top:671px;font-size:9.4px;color:#333">深证</div><div class="t" style="left:192px;top:671px;font-size:9.4px;color:#4a9a5a">12688.94</div><div class="t" style="left:234px;top:671px;font-size:9.4px;color:#4a9a5a">-397.47</div><div class="t" style="left:271px;top:671px;font-size:9.4px;color:#4a9a5a">-3.04%</div><div class="t" style="left:306px;top:671px;font-size:9.4px;color:#333">10649亿</div><div class="t" style="left:345px;top:671px;font-size:9.4px;color:#333">北证</div><div class="t" style="left:365px;top:671px;font-size:9.4px;color:#4a9a5a">14</div>
<div class="b" style="left:1024px;top:672px;width:74px;height:11px;border-radius:6px;background:#a9a9a9"></div>
<div class="b" style="left:1105px;top:672px;width:9px;height:11px;border-radius:3px;background:#d8d848"></div>
<div class="t" style="left:1119px;top:670px;font-size:10px;color:#555">象</div><div class="t" style="left:1132px;top:670px;font-size:10px;color:#555">主</div><div class="t" style="left:1144px;top:670px;font-size:10px;color:#555">!</div>

<!-- taskbar -->
<div class="b" style="left:0;top:685px;width:1152px;height:35px;background:linear-gradient(90deg,#f1f4ec 0,#eef3da 8%,#e6f2b9 22%,#dcf1c0 31%,#d8e8e4 36%,#d9e5f0 48%,#d9e6f1 66%,#d6efd4 74%,#daf2c4 85%,#e3f4ca 100%)"></div>
<svg width="1152" height="720" fill="none">
<path d="M16 706a8 8 0 0 1 16 0z" fill="#5aa0d8"/><path d="M24 706v5a2.500 2.500 0 0 1-5 0" stroke="#444"/>
<circle cx="29" cy="694" r="6" fill="#c0202c"/>
<g fill="#1d9fe0"><rect x="384" y="693" width="8.500" height="8.500"/><rect x="393.500" y="693" width="8.500" height="8.500"/><rect x="384" y="702.500" width="8.500" height="8.500"/><rect x="393.500" y="702.500" width="8.500" height="8.500"/></g>
<rect x="415" y="690" width="161" height="24" rx="12" fill="#f6f8fb"/>
<circle cx="425.500" cy="701" r="4" stroke="#222" stroke-width="1.500"/><path d="M428 704l3.500 3.500" stroke="#222" stroke-width="1.600"/>
<circle cx="555" cy="703" r="7" fill="#c8761c"/><circle cx="555" cy="703" r="3" fill="#7a2c10"/><path d="M544 697l3 10M566 697l-3 10" stroke="#b8a060" stroke-width="1.500"/>
<rect x="585" y="695" width="14" height="16" fill="#f4f4f4"/><rect x="585" y="703" width="7" height="8" fill="#222"/><rect x="592" y="707" width="7" height="4" fill="#666"/>
<path d="M620 697h14l2 2v12h-18v-12z" fill="#1d5f9c"/><rect x="623" y="700" width="4" height="4" fill="#e8503a"/><rect x="628" y="700" width="4" height="4" fill="#7ab83a"/><rect x="623" y="705" width="4" height="4" fill="#2a9fe0"/><rect x="628" y="705" width="4" height="4" fill="#f0b820"/>
<circle cx="660" cy="703" r="9" fill="#1a86c8"/><path d="M652 705c2-7 13-9 17-2c-1 3-5 3-7 2c1 3 4 5 7 4c-4 4-14 3-17-4z" fill="#5ee0a0"/>
<path d="M685 695h7l2 3h9v14h-18z" fill="#f6c93e"/><rect x="685" y="703" width="18" height="5" fill="#2a9fe0"/>
<rect x="718" y="694" width="18" height="18" rx="1" fill="#c8202c"/><path d="M722 704l8-6l-3 5l5-1l-8 6l3-4z" fill="#fff"/>
<path d="M690 714h8M723 714h8" stroke="#999"/>
<rect x="745" y="688" width="29" height="30" fill="#edf2f8"/>
<circle cx="760" cy="703" r="7" fill="#111"/><circle cx="760" cy="703" r="4.500" fill="#d81a2a"/>
<rect x="753" y="714" width="12" height="2" fill="#1a70c8"/>
<circle cx="899" cy="703" r="8.500" fill="#2fe070"/>
<path d="M919 706l4-4l4 4" stroke="#222" stroke-width="1.300"/>
<circle cx="946" cy="703" r="6" fill="#e8d830"/><path d="M941 703a5 5 0 0 1 10 0" stroke="#1a8a3a" stroke-width="2"/>
<rect x="969" y="696" width="5" height="9" rx="2.500" stroke="#555"/><path d="M967 702a4.500 4.500 0 0 0 9 0M971.500 707v3" stroke="#555"/>
<path d="M1013 701a9 9 0 0 1 12 0M1015 704a6 6 0 0 1 8 0M1017.500 707a2.500 2.500 0 0 1 3 0" stroke="#333"/>
<path d="M1031 701h2l3-3v10l-3-3h-2zM1038 701a3 3 0 0 1 0 4" stroke="#333"/>
<rect x="1049" y="700" width="12" height="7" rx="1" fill="#333"/><path d="M1052 700l1-4" stroke="#333"/>
<rect x="1127" y="697" width="8" height="11" rx="1" fill="#333"/><path d="M1125 708h12" stroke="#333" stroke-width="2"/>
</svg>
<div class="t" style="left:27px;top:687px;font-size:8.5px;color:#fff">9</div>
<div class="t" style="left:39px;top:688px;font-size:9px;color:#222">未来几天多雨</div>
<div class="t" style="left:39px;top:701px;font-size:8.5px;color:#666">13°C</div>
<div class="t" style="left:440px;top:695px;font-size:10.5px;color:#555">搜索</div>
<div class="t" style="left:893px;top:696px;font-size:9.5px;color:#145">57</div>
<div class="t" style="left:988px;top:695px;font-size:11.5px;color:#333">中</div>
<div class="t" style="left:1098px;top:689px;font-size:9.5px;color:#333">21:19</div>
<div class="t" style="left:1073px;top:700px;font-size:9.5px;color:#333">2025/10/19</div>

<!-- bandicam -->
<div class="b" style="left:374px;top:310px;width:472px;height:375px;background:#2f3945;overflow:hidden">
 <div class="b" style="left:0;top:0;width:472px;height:26px;background:#394554"></div>
 <div class="b" style="left:0;top:26px;width:472px;height:44px;background:#2a2f35"></div>
 <div class="b" style="left:0;top:26px;width:53px;height:44px;background:#5a90e0"></div>
 <div class="b" style="left:54px;top:26px;width:11px;height:44px;background:#5a8ed8"></div>
 <div class="b" style="left:66px;top:26px;width:54px;height:44px;background:#4c6b9c"></div>
 <div class="b" style="left:121px;top:26px;width:53px;height:44px;background:#4c6b9c"></div>
 <div class="b" style="left:180px;top:31px;width:48px;height:35px;background:#191c20"></div>
 <div class="b" style="left:0;top:70px;width:472px;height:27px;background:#3a4656"></div>
 <div class="b" style="left:0;top:97px;width:120px;height:278px;background:#282e37"></div>
 <div class="b" style="left:296px;top:0;width:25px;height:18px;background:#27a04e"></div>
</div>
<svg width="1152" height="720" fill="none">
<!-- lock / top icons -->
<rect x="678" y="317" width="10" height="8" fill="#e6f0e8"/><path d="M680 317v-2a3 3 0 0 1 6 0v2" stroke="#e6f0e8" stroke-width="1.500"/>
<path d="M702 316h4l1 1h5v8h-10z" fill="#79838f"/><circle cx="731" cy="319" r="4.500" fill="#79838f"/><path d="M731 316v3h2" stroke="#394554"/>
<path d="M779 321h5M803 321h7" stroke="#79838f" stroke-width="1.500"/><path d="M828 315l7 7M835 315l-7 7" stroke="#79838f" stroke-width="1.500"/>
<!-- monitor -->
<rect x="391.500" y="351.500" width="18" height="12" stroke="#fff" stroke-width="1.500"/><path d="M396 367h9" stroke="#fff" stroke-width="1.500"/>
<path d="M431 357l2.500 2.500L436 357" stroke="#fff"/>
<rect x="457" y="351" width="20" height="6" fill="#a8b4c8"/>
<path d="M514 351h14a4 4 0 0 1 4 4v6a2 2 0 0 1-4 0l-2-2h-10l-2 2a2 2 0 0 1-4 0v-6a4 4 0 0 1 4-4z" fill="#a8b4c8"/><circle cx="517" cy="355" r="1.800" fill="#4c6b9c"/><circle cx="525" cy="355" r="1.800" fill="#4c6b9c"/>
<circle cx="578" cy="355" r="5" stroke="#5a6068" stroke-width="2"/><path d="M571 366h14v-2a7 4 0 0 0-14 0z" fill="#4a4f56"/><path d="M586 364l4 4M590 364l-4 4" stroke="#ccc"/>
<path d="M614 354h3l4-4v14l-4-4h-3z" fill="#c5c9ce"/><path d="M623 353a6 6 0 0 1 0 8" stroke="#c5c9ce" stroke-width="1.500"/>
<path d="M616 370l3 2l3-2M649 370l3 2l3-2" stroke="#555"/>
<rect x="649" y="350" width="6" height="10" rx="3" fill="#a4a8ad"/><path d="M646 357a6 6 0 0 0 12 0M652 363v3M648 366h8" stroke="#a4a8ad" stroke-width="1.300"/>
<path d="M667.500 351v12" stroke="#8a3a20" stroke-width="2"/>
<circle cx="685" cy="357" r="5" stroke="#4a4f55" stroke-width="2"/><path d="M684 355v9l2-2l2 3l1-1l-2-2.500h3z" fill="#ccc"/>
<path d="M712 351h10M717 351v12M715 363h4" stroke="#4a4e54" stroke-width="2.500"/>
<path d="M749 351v12M755.500 351v12" stroke="#4a4e54" stroke-width="3"/>
<circle cx="792.500" cy="357.500" r="23.500" fill="#c5212f"/>
<rect x="825" y="354" width="15" height="11" rx="1.500" fill="#c9cdd2"/><rect x="829" y="351" width="6" height="3" fill="#c9cdd2"/><circle cx="832.500" cy="359.500" r="3.500" fill="#2a2f35"/><circle cx="832.500" cy="359.500" r="2" fill="#c9cdd2"/>
<path d="M821 343v10l2.300-2.300l2 3.800l1.500-.7l-2-3.700h3.200z" fill="#fff"/>
<rect x="382.500" y="388.500" width="10" height="10" stroke="#a8b0ba" stroke-dasharray="2 1"/>
<rect x="750" y="390" width="8" height="8" fill="#7a8490"/><path d="M758 392l3-2v8l-3-2" fill="#7a8490"/><circle cx="760" cy="398" r="1.500" fill="#c43"/>
<rect x="772" y="390" width="11" height="8" stroke="#6e7884"/><path d="M773 397l3-3l3 2l3-3" stroke="#6e7884"/>
<path d="M796 390v8M804 390v8M798 392v4M802 392v4" stroke="#6e7884"/>
<path d="M826 396l5-4l5 4" stroke="#707a86"/>
<!-- side icons -->
<path d="M388 432l6-6l6 6h-2v6h-8v-6z" fill="#b8bec6"/>
<circle cx="394" cy="469" r="4" stroke="#9aa2ac" stroke-width="2.500"/><circle cx="394" cy="469" r="6" stroke="#9aa2ac" stroke-dasharray="2 2" stroke-width="1.500"/>
<rect x="388" y="501" width="10" height="9" stroke="#e8ecf0" stroke-width="1.200"/><path d="M391 503v5l3-2.500z" fill="#e8ecf0"/><circle cx="397" cy="509" r="3" fill="#e8ecf0"/>
<rect x="388" y="537" width="10" height="9" stroke="#89919c"/><path d="M389 545l3-3l2 2l2-3" stroke="#89919c"/><circle cx="397" cy="547" r="3" stroke="#89919c"/>
<circle cx="393.500" cy="580.500" r="6.500" fill="#b8bec6"/><path d="M393.500 579v5M393.500 576.500v1.200" stroke="#282e37" stroke-width="1.700"/>
<!-- main -->
<path d="M508 441.500H832M508 588.500H832" stroke="#404c5a"/>
<path d="M510 458l2.500 3l5-6M510 478l2.500 3l5-6M510 499l2.500 3l5-6" stroke="#b4bbc3"/>
<rect x="584" y="592" width="247" height="43" fill="#3f4a58"/><rect x="584" y="637" width="247" height="40" fill="#3f4a58"/>
<rect x="584" y="680" width="115" height="6" fill="#4b5664"/><rect x="704" y="680" width="127" height="6" fill="#4b5664"/>
<rect x="703" y="448" width="128" height="19" fill="#3c4754"/><rect x="703" y="469" width="128" height="19" fill="#3c4754"/>
<rect x="703" y="529" width="128" height="19" fill="#5a6573"/>
</svg>
<div class="cb" style="top:452px"></div><div class="cb" style="top:473px"></div><div class="cb" style="top:493px"></div><div class="cb" style="top:514px"></div><div class="cb" style="top:534px"></div>
<div class="t" style="left:381px;top:315px;font-size:10.5px;font-weight:bold;letter-spacing:.2px;color:#d6dbe1">BANDI<span style="color:#c8283a">CAM</span></div>
<div class="b" style="left:450px;top:317px;width:40px;height:12px;background:#4a5564"></div>
<div class="t bk" style="left:452px;top:316px;font-size:8.8px">班迪录屏</div>
<div class="b" style="left:498px;top:317px;width:30px;height:12px;background:#2a323d"></div>
<div class="t" style="left:501px;top:316px;font-size:7.2px;color:#b8bec6">ADMIN</div>
<div class="b" style="left:531px;top:317px;width:63px;height:12px;background:#2a323d"></div>
<div class="t" style="left:534px;top:316px;font-size:7.2px;color:#b8bec6"><span style="color:#e0a010;font-weight:bold">UN</span>REGISTERED</div>
<div class="t" style="left:752px;top:312px;font-size:11px;font-weight:bold;color:#79838f">?</div>
<div class="t" style="left:458px;top:356px;font-size:6.5px;font-weight:bold;color:#a8b4c8">HDMI</div>
<div class="t" style="left:777px;top:350px;font-size:15px;font-weight:bold;color:#f6e6e6">REC</div>
<div class="t" style="left:400px;top:387px;font-size:9.4px;color:#c5cbd2">1920x1200 - (0, 0), (1920, 1200) - 全部显示器</div>
<div class="t bk" style="left:406px;top:426px;color:#9aa2ac">首页</div><div class="t bk" style="left:406px;top:463px;color:#9aa2ac">常规</div><div class="t bk" style="left:406px;top:501px;color:#f0f2f4;font-weight:bold">录像</div><div class="t bk" style="left:406px;top:538px;color:#9aa2ac">截图</div><div class="t bk" style="left:406px;top:574px;color:#9aa2ac">关于</div>
<div class="t bk" style="left:508px;top:426px;font-weight:bold;color:#d4d9de">录制</div>
<div class="t bk" style="left:525px;top:452px">录制/停止 热键</div><div class="t bk" style="left:525px;top:473px">暂停 热键</div><div class="t bk" style="left:525px;top:494px">显示鼠标指针</div><div class="t bk" style="left:525px;top:514px">添加鼠标点击效果</div><div class="t bk" style="left:525px;top:534px">添加网络摄像头叠加画面</div>
<div class="t bk" style="left:707px;top:452px">End</div><div class="t bk" style="left:707px;top:472px">Enter</div>
<div class="t bk" style="left:758px;top:533px;color:#dfe3e7">设置</div>
<div class="t bk" style="left:508px;top:572px;color:#d4d9de"><b>格式</b> - MP4</div>
<div class="t bk" style="left:508px;top:598px">视频</div><div class="t bk" style="left:508px;top:641px">音频</div>
<div class="t bk" style="left:591px;top:600px">H264 - Intel® Quick Sync Video (VBR)</div>
<div class="t bk" style="left:591px;top:617px">Full Size, 30.00fps, 80q</div>
<div class="t bk" style="left:591px;top:643px">AAC - Advanced Audio Coding</div>
<div class="t bk" style="left:591px;top:660px">48.0KHz, stereo, 192kbps</div>
</div></body></html>
